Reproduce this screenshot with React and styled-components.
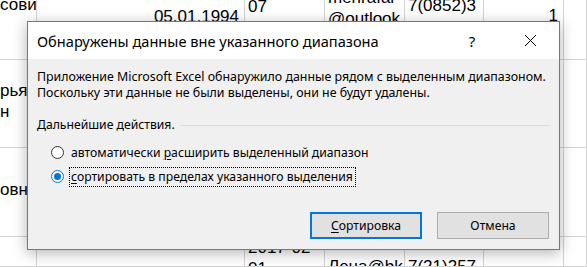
import React from "react";
import styled, { createGlobalStyle } from "styled-components";

const GlobalStyle = createGlobalStyle`
  html, body {
    margin: 0;
    padding: 0;
    background: #ffffff;
    overflow: hidden;
  }
  body {
    width: 587px;
    height: 267px;
    position: relative;
  }
`;

// ---------- spreadsheet behind the dialog ----------
const Sheet = styled.div`
  display: grid;
  grid-template-columns: 37px 208px 80px 80px 79px 80px 1fr;
  grid-template-rows: 60px 88px 89px 1fr;
  width: 587px;
  height: 267px;
  font-family: "Liberation Sans", Arial, sans-serif;
  font-size: 17px;
  line-height: 21px;
  color: #000;
`;

const Cell = styled.div`
  border-right: 1px solid #d4d4d4;
  border-bottom: 1px solid #d4d4d4;
  overflow: hidden;
  white-space: nowrap;
  text-align: ${(p) => (p.$right ? "right" : "left")};
  padding: 0 ${(p) => (p.$right ? "5px" : "0")} 0 ${(p) => (p.$right ? "0" : "3px")};
`;

const Lines = styled.div`
  margin-top: ${(p) => p.$top || 0}px;
  margin-left: ${(p) => p.$shift || 0}px;
`;

const rows = [
  [
    { lines: ["сови"], top: -6, shift: -3 },
    { lines: ["05.01.1994"], top: 6, right: true },
    { lines: ["07"], top: -4 },
    { lines: ["mehrafar", "@outlook"], top: -13 },
    { lines: ["7(0852)3"], top: -5 },
    { lines: ["1"], top: 5, right: true },
    { lines: [] },
  ],
  [
    { lines: ["рья", "н"], top: 20, shift: -3 },
    { lines: [] },
    { lines: [] },
    { lines: [] },
    { lines: [] },
    { lines: [] },
    { lines: [] },
  ],
  [
    { lines: ["овна"], top: 31, shift: -3 },
    { lines: [] },
    { lines: [] },
    { lines: [] },
    { lines: [] },
    { lines: ["2"], top: 35, right: true },
    { lines: [] },
  ],
  [
    { lines: [] },
    { lines: [] },
    { lines: ["2017-02-", "01"], top: 0 },
    { lines: ["Лена@bk"], top: 19 },
    { lines: ["7(21)257"], top: 19 },
    { lines: [] },
    { lines: [] },
  ],
];

// ---------- dialog ----------
const Dialog = styled.div`
  position: absolute;
  left: 27px;
  top: 21px;
  width: 531px;
  height: 227px;
  border: 1px solid #777777;
  background: #f0f0f0;
  box-shadow: 0 3px 14px rgba(0, 0, 0, 0.3);
  display: flex;
  flex-direction: column;
  font-family: "Noto Sans", "Segoe UI", sans-serif;
  color: #000;
`;

const TitleBar = styled.div`
  height: 37px;
  background: #ffffff;
  display: flex;
  align-items: center;
  padding-left: 9px;
`;

const Title = styled.div`
  flex: 1;
  font-size: 14.6px;
`;

const TitleButton = styled.div`
  width: 58px;
  height: 37px;
  display: flex;
  align-items: center;
  justify-content: center;
  font-size: 15px;
`;

const Body = styled.div`
  flex: 1;
  display: flex;
  flex-direction: column;
  padding: 10px 10px 10px 9px;
  font-size: 12.2px;
  line-height: 16px;
`;

const Message = styled.div`
  margin-top: 0;
  font-size: 12.4px;
`;

const Section = styled.div`
  display: flex;
  align-items: center;
  gap: 5px;
  margin-top: 16px;
`;

const Rule = styled.div`
  flex: 1;
  height: 1px;
  background: #dcdcdc;
  margin-top: 1px;
`;

const Options = styled.div`
  display: flex;
  flex-direction: column;
  gap: 3px;
  margin: 9px 0 0 14px;
`;

const Option = styled.label`
  display: flex;
  align-items: center;
  gap: 6px;
  height: 21px;
`;

const Radio = styled.span`
  width: 13px;
  height: 13px;
  box-sizing: border-box;
  border-radius: 50%;
  border: 1px solid ${(p) => (p.$checked ? "#0078d7" : "#333333")};
  background: #ffffff;
  display: flex;
  align-items: center;
  justify-content: center;
  flex-shrink: 0;
  &::after {
    content: "";
    width: 7px;
    height: 7px;
    border-radius: 50%;
    background: ${(p) => (p.$checked ? "#0078d7" : "transparent")};
  }
`;

const OptionText = styled.span`
  padding: 1px 2px 1px 1px;
  outline: ${(p) => (p.$focus ? "1px dotted #000" : "none")};
  outline-offset: 0;
`;

const Key = styled.span`
  text-decoration: underline;
  text-underline-offset: 2px;
`;

const Footer = styled.div`
  margin-top: auto;
  display: flex;
  justify-content: flex-end;
  gap: 15px;
`;

const Button = styled.div`
  width: 112px;
  height: 27px;
  box-sizing: border-box;
  display: flex;
  align-items: center;
  justify-content: center;
  background: #e1e1e1;
  border: ${(p) => (p.$primary ? "2px solid #0078d7" : "1px solid #adadad")};
  font-size: 12.2px;
`;

function CloseIcon() {
  return (
    <svg width="13" height="13" viewBox="0 0 13 13">
      <path d="M1 1 L12 12 M12 1 L1 12" stroke="#000" strokeWidth="1" fill="none" />
    </svg>
  );
}

export default function App() {
  return (
    <>
      <GlobalStyle />
      <Sheet>
        {rows.map((row, r) =>
          row.map((c, i) => (
            <Cell key={`${r}-${i}`} $right={c.right}>
              <Lines $top={c.top} $shift={c.shift}>
                {c.lines.map((l) => (
                  <div key={l}>{l}</div>
                ))}
              </Lines>
            </Cell>
          ))
        )}
      </Sheet>

      <Dialog>
        <TitleBar>
          <Title>Обнаружены данные вне указанного диапазона</Title>
          <TitleButton>?</TitleButton>
          <TitleButton>
            <CloseIcon />
          </TitleButton>
        </TitleBar>
        <Body>
          <Message>
            Приложение Microsoft Excel обнаружило данные рядом с выделенным диапазоном.
            <br />
            Поскольку эти данные не были выделены, они не будут удалены.
          </Message>
          <Section>
            <span>Дальнейшие действия.</span>
            <Rule />
          </Section>
          <Options>
            <Option>
              <Radio />
              <OptionText>
                автоматически <Key>р</Key>асширить выделенный диапазон
              </OptionText>
            </Option>
            <Option>
              <Radio $checked />
              <OptionText $focus>
                <Key>с</Key>ортировать в пределах указанного выделения
              </OptionText>
            </Option>
          </Options>
          <Footer>
            <Button $primary>
              <span>
                <Key>С</Key>ортировка
              </span>
            </Button>
            <Button>Отмена</Button>
          </Footer>
        </Body>
      </Dialog>
    </>
  );
}
